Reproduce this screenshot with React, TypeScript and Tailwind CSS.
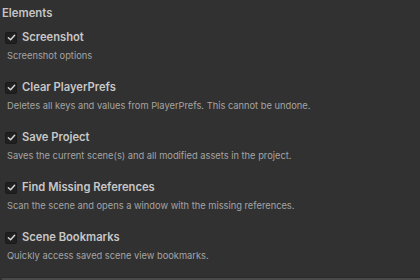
import React from "react";

const items = [
  { title: "Screenshot", desc: "Screenshot options" },
  { title: "Clear PlayerPrefs", desc: "Deletes all keys and values from PlayerPrefs. This cannot be undone." },
  { title: "Save Project", desc: "Saves the current scene(s) and all modified assets in the project." },
  { title: "Find Missing References", desc: "Scan the scene and opens a window with the missing references." },
  { title: "Scene Bookmarks", desc: "Quickly access saved scene view bookmarks." },
];

function Check() {
  return (
    <div className="w-[12px] h-[12px] rounded-[2px] bg-[#202020] border border-[#1a1a1a] flex items-center justify-center">
      <svg width="9" height="9" viewBox="0 0 10 10">
        <path d="M1.5 5.2 L4 7.5 L8.5 2.5" fill="none" stroke="#d8d8d8" strokeWidth="1.6" strokeLinecap="round" strokeLinejoin="round" />
      </svg>
    </div>
  );
}

export default function App() {
  return (
    <div className="w-[420px] h-[280px] bg-[#313131] overflow-hidden flex flex-col" style={{ fontFamily: "Inter, 'Noto Sans', sans-serif" }}>
      <div className="h-[27px] flex items-center pl-[2px] text-[11.3px] font-semibold text-[#c4c4c4]">Elements</div>
      {items.map((it) => (
        <div key={it.title} className="h-[50px] flex flex-col">
          <div className="h-[21px] flex items-center pl-[5px] gap-[5px]">
            <Check />
            <span className="text-[11.2px] font-semibold text-[#c8c8c8]">{it.title}</span>
          </div>
          <div className="h-[16px] flex items-center pl-[7px] text-[9.3px] text-[#a4a4a4]">{it.desc}</div>
        </div>
      ))}
      <div className="flex-1 ml-[2px] bg-[#4a4a4a] border-t border-[#2a2a2a]" />
    </div>
  );
}
